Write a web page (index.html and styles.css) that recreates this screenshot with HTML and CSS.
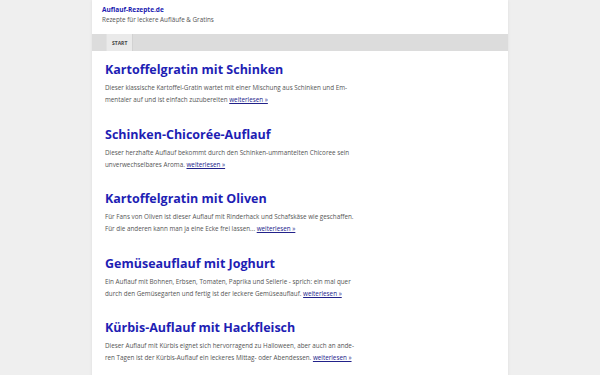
FILE: index.html
```html
<!DOCTYPE html>
<html lang="de">
<head>
    <meta charset="UTF-8">
    <meta name="viewport" content="width=device-width, initial-scale=1.0">
    <title>Auflauf-Rezepte.de</title>
    <link rel="stylesheet" href="styles.css">
</head>
<body>

<div class="page">
    <header class="site-header">
        <a class="site-title" href="#">Auflauf-Rezepte.de</a>
        <p class="site-description">Rezepte für leckere Aufläufe &amp; Gratins</p>
    </header>

    <nav class="main-nav">
        <a class="current" href="#">Start</a>
    </nav>

    <main class="content">
        <article class="post">
            <h2><a href="#">Kartoffelgratin mit Schinken</a></h2>
            <p>Dieser klassische Kartoffel-Gratin wartet mit einer Mischung aus Schinken und Em&shy;mentaler auf und ist einfach zuzubereiten <a href="#">weiterlesen »</a></p>
        </article>
        <article class="post">
            <h2><a href="#">Schinken-Chicorée-Auflauf</a></h2>
            <p>Dieser herzhafte Auflauf bekommt durch den Schinken-ummantelten Chicoree sein unverwechselbares Aroma. <a href="#">weiterlesen »</a></p>
        </article>
        <article class="post">
            <h2><a href="#">Kartoffelgratin mit Oliven</a></h2>
            <p>Für Fans von Oliven ist dieser Auflauf mit Rinderhack und Schafskäse wie geschaffen. Für die anderen kann man ja eine Ecke frei lassen... <a href="#">weiterlesen »</a></p>
        </article>
        <article class="post">
            <h2><a href="#">Gemüseauflauf mit Joghurt</a></h2>
            <p>Ein Auflauf mit Bohnen, Erbsen, Tomaten, Paprika und Sellerie - sprich: ein mal quer durch den Gemüsegarten und fertig ist der leckere Gemüseauflauf. <a href="#">weiterlesen »</a></p>
        </article>
        <article class="post">
            <h2><a href="#">Kürbis-Auflauf mit Hackfleisch</a></h2>
            <p>Dieser Auflauf mit Kürbis eignet sich hervorragend zu Halloween, aber auch an an&shy;de&shy;ren Tagen ist der Kürbis-Auflauf ein leckeres Mittag- oder Abendessen. <a href="#">weiterlesen »</a></p>
        </article>
    </main>
</div>

</body>
</html>
```

FILE: styles.css
```css
body {
    font-family: "Open Sans", Arial, sans-serif;
    margin: 0;
    padding: 0;
    background-color: #efefef;
    color: #555;
}
.page {
    width: 416px;
    min-height: 375px;
    margin: 0 auto;
    background-color: #fff;
    box-shadow: 0 0 3px rgba(0, 0, 0, 0.08);
}
.site-header {
    padding: 4px 10px 0 10px;
    height: 30px;
}
.site-title {
    display: block;
    font-size: 6.5px;
    font-weight: bold;
    line-height: 11px;
    color: #2020b0;
    text-decoration: none;
}
.site-description {
    margin: 0;
    font-size: 6.3px;
    line-height: 10px;
}
.main-nav {
    display: flex;
    height: 17px;
    padding-left: 14px;
    background-color: #dcdcdc;
}
.main-nav a {
    display: flex;
    align-items: center;
    padding: 0 5px;
    font-size: 5px;
    font-weight: bold;
    text-transform: uppercase;
    color: #444;
    text-decoration: none;
    background-color: #eaeaea;
    border-left: 1px solid #e2e2e2;
    border-right: 1px solid #d2d2d2;
}
.content {
    width: 252px;
    padding: 10px 13px 0 13px;
}
.post {
    height: 64.5px;
}
.post h2 {
    margin: 0;
    font-size: 12.5px;
    line-height: 18px;
    font-weight: bold;
}
.post h2 a {
    color: #1e1eb4;
    text-decoration: none;
}
.post p {
    margin: 3px 0 0 0;
    font-size: 6.3px;
    line-height: 12px;
    hyphens: manual;
}
.post p a {
    color: #22228a;
}
```
